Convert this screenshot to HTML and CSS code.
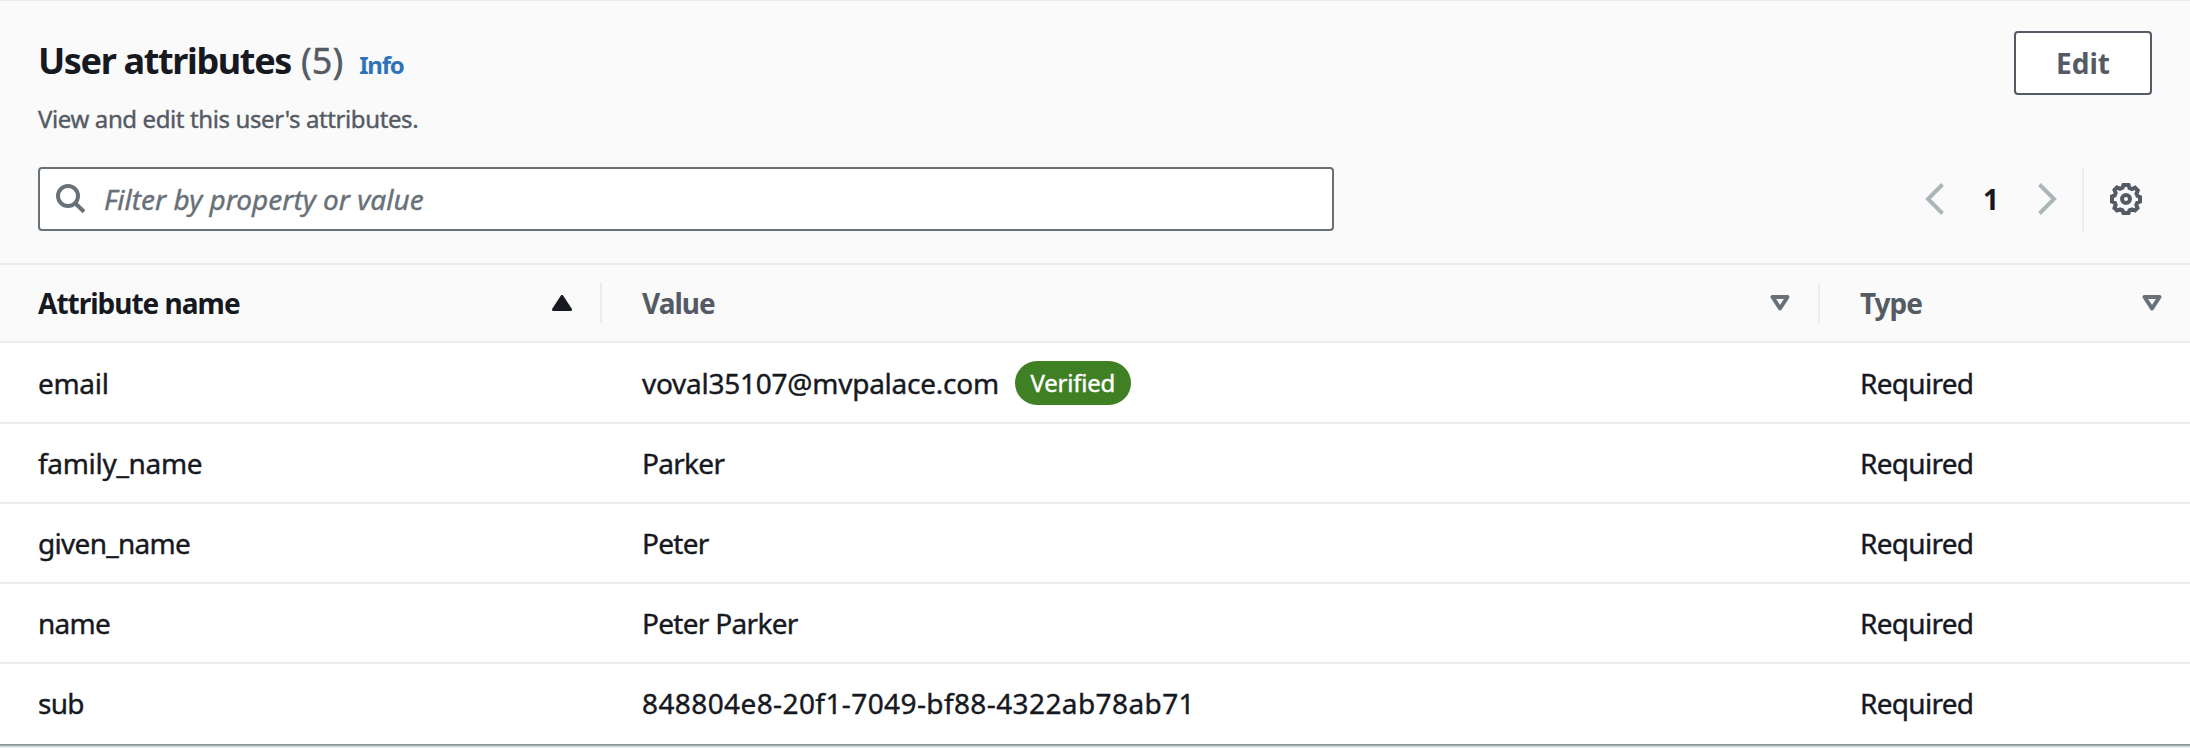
FILE: index.html
```html
<!DOCTYPE html>
<html lang="en">
<head>
<meta charset="utf-8">
<title>User attributes</title>
<link rel="stylesheet" href="styles.css">
</head>
<body>
<section class="panel">
  <header class="panel-header">
    <div class="title-row">
      <div class="heading">
        <h2 class="title"><span class="title-text">User attributes</span><span class="count">(5)</span><a class="info">Info</a></h2>
        <p class="description">View and edit this user's attributes.</p>
      </div>
      <button class="edit">Edit</button>
    </div>
    <div class="tools">
      <div class="search">
        <svg class="search-icon" width="32" height="32" viewBox="0 0 32 32" fill="none" stroke="#687078" stroke-width="4"><circle cx="13" cy="13" r="10"/><path d="M20 20l9 8.8"/></svg>
        <span class="placeholder">Filter by property or value</span>
      </div>
      <div class="controls">
        <svg width="20" height="32" viewBox="0 0 20 32" fill="none" stroke="#aab7b8" stroke-width="4"><path d="M17.500 1.500L3 16l14.500 14.500"/></svg>
        <span class="page">1</span>
        <svg width="20" height="32" viewBox="0 0 20 32" fill="none" stroke="#aab7b8" stroke-width="4"><path d="M2.500 1.500L17 16L2.500 30.500"/></svg>
        <span class="divider"></span>
        <svg class="gear" width="32" height="32" viewBox="0 0 32 32" fill="none" stroke="#545b64" stroke-width="4" stroke-linejoin="miter"><path d="M13.500 2h5l1 3l2.500 1l3-1.300l2.800 2.800L26.500 10.500l1 2.500L30 14v4.500l-2.700 1l-1 2.500l1.200 3l-2.500 2.500l-3-1.200l-2.500 1l-1 2.700h-5l-1-2.700l-2.500-1l-3 1.200L4.500 25l1.200-3l-1-2.500L2 18.500v-5l2.700-1l1-2.500L4.500 7L7 4.500l3 1.300l2.500-1z"/><circle cx="16" cy="16" r="4"/></svg>
      </div>
    </div>
  </header>
  <div class="row head">
    <div class="cell sorted"><span class="tight">Attribute name</span><svg class="sort" width="20" height="16" viewBox="0 0 20 16"><path d="M10 1.500L18.500 14.500H1.500z" fill="#16191f" stroke="#16191f" stroke-width="3" stroke-linejoin="round"/></svg></div>
    <div class="cell"><span class="tight">Value</span><svg class="sort" width="20" height="16" viewBox="0 0 20 16"><path d="M2.500 2h15L10 13.500z" fill="none" stroke="#687078" stroke-width="4" stroke-linejoin="round"/></svg></div>
    <div class="cell"><span class="tight">Type</span><svg class="sort" width="20" height="16" viewBox="0 0 20 16"><path d="M2.500 2h15L10 13.500z" fill="none" stroke="#687078" stroke-width="4" stroke-linejoin="round"/></svg></div>
  </div>
  <div class="row tall"><div class="cell"><span class="wide">email</span></div><div class="cell"><span class="address">voval35107@mvpalace.com</span><span class="badge">Verified</span></div><div class="cell">Required</div></div>
  <div class="row"><div class="cell"><span class="wide">family_name</span></div><div class="cell">Parker</div><div class="cell">Required</div></div>
  <div class="row"><div class="cell">given_name</div><div class="cell">Peter</div><div class="cell">Required</div></div>
  <div class="row"><div class="cell">name</div><div class="cell">Peter Parker</div><div class="cell">Required</div></div>
  <div class="row last"><div class="cell">sub</div><div class="cell"><span class="uuid">848804e8-20f1-7049-bf88-4322ab78ab71</span></div><div class="cell">Required</div></div>
  <div class="edge"></div>
</section>
</body>
</html>
```
FILE: styles.css
```css
* { box-sizing: border-box; }
body { margin: 0; background: #fff; color: #16191f; font: 28px/44px "Noto Sans", "Open Sans", sans-serif; }
svg { display: block; flex: none; }
.panel { height: 748px; overflow: hidden; }
.panel-header { height: 263px; padding: 30px 38px 0; background: #fafafa; border-top: 1px solid #eaeded; }
.title-row { display: flex; justify-content: space-between; align-items: flex-start; height: 136px; }
.heading { padding-top: 6px; }
.title { display: flex; align-items: baseline; margin: 0; font-size: 36px; line-height: 48px; font-weight: 700; }
.title-text { letter-spacing: -1.35px; }
.count { margin-left: 10px; font-weight: 400; color: #545b64; -webkit-text-stroke: .4px; }
.info { margin-left: 16px; font-size: 24px; font-weight: 700; color: #2e73b8; letter-spacing: -1.2px; }
.description { margin: 14px 0 0; font-size: 24px; line-height: 32px; color: #545b64; letter-spacing: -.39px; -webkit-text-stroke: .4px; }
.edit { width: 138px; height: 64px; padding: 0; border: 2px solid #545b64; border-radius: 4px; background: #fff; color: #545b64; font: 700 28px/40px "Noto Sans", sans-serif; }
.tools { display: flex; justify-content: space-between; }
.search { display: flex; align-items: center; width: 1296px; height: 64px; padding-left: 15px; border: 2px solid #687078; border-radius: 4px; background: #fff; }
.placeholder { margin-left: 17px; color: #687078; font-style: italic; -webkit-text-stroke: .4px; }
.controls { display: flex; align-items: center; height: 64px; padding-right: 10px; }
.page { width: 92px; text-align: center; font-weight: 700; }
.divider { width: 2px; height: 64px; margin: 0 26px 0 25px; background: #eaeded; }
.row { display: grid; grid-template-columns: 602px 1218px 1fr; height: 80px; border-bottom: 2px solid #eaeded; }
.cell { display: flex; align-items: center; padding-left: 38px; letter-spacing: -.7px; -webkit-text-stroke: .4px; }
.cell + .cell { padding-left: 40px; }
.tall { height: 81px; }
.last { border: 0; padding-bottom: 2px; }
.head { height: 80px; border-top: 2px solid #eaeded; background: #fafafa; color: #545b64; font-weight: 700; }
.head .cell { justify-content: space-between; position: relative; padding-right: 30px; -webkit-text-stroke: 0; }
.head .cell:last-child { padding-right: 28px; }
.head .cell:not(:last-child)::after { content: ""; position: absolute; right: 0; top: 18px; width: 2px; height: 40px; background: #eaeded; }
.head .sorted { color: #16191f; }
.tight { letter-spacing: -1px; }
.wide { letter-spacing: -.3px; }
.address { letter-spacing: -.25px; }
.uuid { letter-spacing: .4px; }
.badge { margin-left: 16px; width: 116px; height: 44px; border-radius: 22px; background: #3f8024; color: #fff; font-size: 24px; line-height: 44px; letter-spacing: -.22px; text-align: center; }
.edge { height: 4px; background: linear-gradient(#879596 0 1px, #a3adb0 1px 2px, #d3d8da 2px 3px, #e8ebeb 3px); }
```
